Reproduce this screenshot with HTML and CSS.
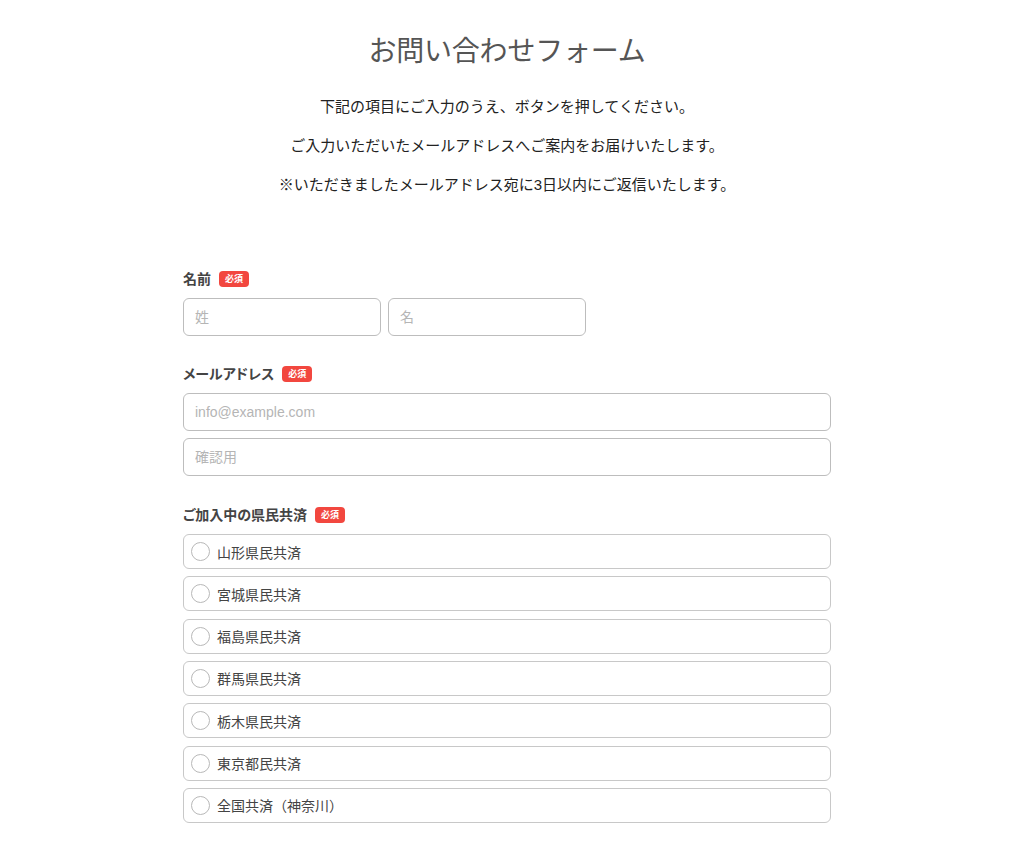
FILE: index.html
```html
<!DOCTYPE html>
<html lang="ja">
<head>
<meta charset="utf-8">
<title>お問い合わせフォーム</title>
<link rel="stylesheet" href="styles.css">
</head>
<body>
<div class="page">
  <header class="intro">
    <h1 class="title">お問い合わせフォーム</h1>
    <p class="lead lead-first">下記の項目にご入力のうえ、ボタンを押してください。</p>
    <p class="lead">ご入力いただいたメールアドレスへご案内をお届けいたします。</p>
    <p class="lead">※いただきましたメールアドレス宛に3日以内にご返信いたします。</p>
  </header>
  <form class="form">
    <div class="field field-first">
      <div class="label">名前<span class="req">必須</span></div>
      <div class="name-row">
        <input class="input input-half" type="text" placeholder="姓">
        <input class="input input-half" type="text" placeholder="名">
      </div>
    </div>
    <div class="field">
      <div class="label">メールアドレス<span class="req">必須</span></div>
      <div class="stack">
        <input class="input" type="text" placeholder="info@example.com">
        <input class="input" type="text" placeholder="確認用">
      </div>
    </div>
    <div class="field field-radio">
      <div class="label">ご加入中の県民共済<span class="req">必須</span></div>
      <div class="options">
        <label class="option"><span class="radio"></span>山形県民共済</label>
        <label class="option"><span class="radio"></span>宮城県民共済</label>
        <label class="option"><span class="radio"></span>福島県民共済</label>
        <label class="option"><span class="radio"></span>群馬県民共済</label>
        <label class="option"><span class="radio"></span>栃木県民共済</label>
        <label class="option"><span class="radio"></span>東京都民共済</label>
        <label class="option"><span class="radio"></span>全国共済（神奈川）</label>
      </div>
    </div>
  </form>
</div>
</body>
</html>
```
FILE: styles.css
```css
* { box-sizing: border-box; }
html, body {
  margin: 0;
  padding: 0;
  background: #fff;
}
body {
  font-family: "Liberation Sans", "Noto Sans CJK JP", sans-serif;
  color: #333;
}
.page {
  width: 1014px;
  display: flex;
  flex-direction: column;
  align-items: center;
}
.intro {
  width: 648px;
  text-align: center;
}
.title {
  margin: 32px 0 0;
  font-size: 28px;
  line-height: 40px;
  font-weight: normal;
  color: #555;
  letter-spacing: -0.2px;
}
.lead {
  margin: 15px 0 0;
  font-size: 15px;
  line-height: 24px;
  color: #222;
  white-space: nowrap;
}
.lead-first { margin-top: 23px; }
.form {
  width: 648px;
  display: flex;
  flex-direction: column;
}
.field { margin-top: 28px; }
.field-first { margin-top: 72px; }
.field-radio { margin-top: 29px; }
.label {
  display: flex;
  align-items: center;
  font-size: 14px;
  line-height: 20px;
  font-weight: bold;
  color: #444;
  margin-bottom: 9px;
  font-feature-settings: "palt";
}
.req {
  display: inline-block;
  margin-left: 8px;
  background: #f2473f;
  color: #fff;
  font-size: 9px;
  line-height: 16px;
  height: 16px;
  padding: 0 6px;
  border-radius: 4px;
  font-weight: bold;
  font-feature-settings: normal;
}
.name-row {
  display: flex;
  gap: 7px;
}
.stack {
  display: flex;
  flex-direction: column;
  gap: 7px;
}
.input {
  display: block;
  width: 100%;
  height: 38px;
  border: 1px solid #bdbdbd;
  border-radius: 6px;
  padding: 0 11px;
  font-family: "Liberation Sans", "Noto Sans CJK JP", sans-serif;
  font-size: 14px;
  color: #333;
  background: #fff;
  outline: none;
}
.input::placeholder { color: #b5b5b5; }
.input-half { width: 198px; }
.options {
  display: flex;
  flex-direction: column;
  gap: 7.33px;
}
.option {
  display: flex;
  align-items: center;
  height: 35px;
  border: 1px solid #c8c8c8;
  border-radius: 6px;
  padding-left: 7px;
  font-size: 14px;
  color: #444;
}
.radio {
  width: 19px;
  height: 19px;
  border: 1px solid #b8b8b8;
  border-radius: 50%;
  margin-right: 7px;
  flex: none;
}
```
